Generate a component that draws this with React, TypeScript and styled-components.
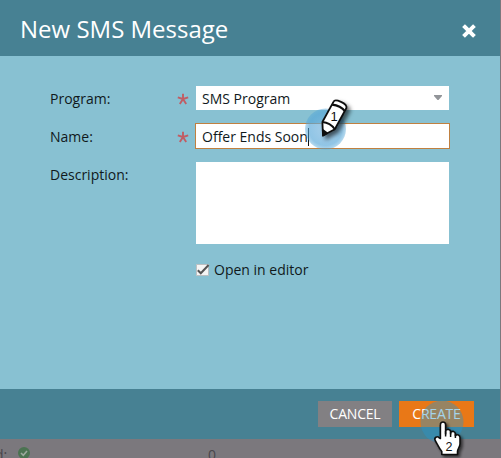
import React from "react";
import styled, { createGlobalStyle } from "styled-components";

const GlobalStyle = createGlobalStyle`
  *, *::before, *::after { box-sizing: border-box; }
  body {
    margin: 0;
    overflow: hidden;
    background: #7b787d;
    font-family: "Open Sans", sans-serif;
    font-size: 14px;
    line-height: 20px;
    color: #10191c;
  }
`;

const Page = styled.div`
  position: relative;
  width: 501px;
  height: 458px;
  overflow: hidden;
`;

const Dialog = styled.section`
  width: 500px;
  height: 439px;
  display: flex;
  flex-direction: column;
`;

const Header = styled.header`
  height: 56px;
  flex: none;
  display: flex;
  align-items: center;
  justify-content: space-between;
  padding: 2px 23px 0 20px;
  background: #478193;
`;

const Title = styled.h1`
  margin: 0;
  font-size: 24px;
  line-height: 32px;
  font-weight: 400;
  color: #fff;
`;

const CloseButton = styled.button`
  display: flex;
  margin: 3px 0 0;
  padding: 0;
  border: 0;
  background: none;
`;

const Body = styled.div`
  flex: 1;
  padding: 30px 50px 0;
  background: #88c1d2;
`;

const Field = styled.div<{ $gap?: number }>`
  display: grid;
  grid-template-columns: 127px 19px 254px;
  align-items: start;
  margin-bottom: ${(p) => p.$gap ?? 0}px;
`;

const Label = styled.label<{ $top?: number }>`
  padding-top: ${(p) => p.$top ?? 3}px;
`;

const Required = styled.svg<{ $top: number }>`
  display: block;
  margin-top: ${(p) => p.$top}px;
`;

const Select = styled.div`
  width: 253px;
  height: 24px;
  display: flex;
  align-items: center;
  justify-content: space-between;
  padding: 2px 7px 0 6px;
  background: #fff;
`;

const Arrow = styled.svg`
  margin-top: -4px;
`;

const TextInput = styled.div`
  width: 255px;
  height: 26px;
  margin-left: -1px;
  display: flex;
  align-items: center;
  padding: 1px 6px 0;
  border: 1px solid #c08040;
  background: #fff;
`;

const Caret = styled.span`
  width: 1px;
  height: 18px;
  background: #111;
`;

const TextArea = styled.div`
  width: 253px;
  height: 82px;
  background: #fff;
`;

const CheckRow = styled.label`
  display: flex;
  align-items: center;
  gap: 4px;
  margin: 16px 0 0 146px;
`;

const Footer = styled.footer`
  height: 50px;
  flex: none;
  display: flex;
  align-items: center;
  justify-content: flex-end;
  gap: 7px;
  padding: 0 26px 0 0;
  background: #478193;
`;

const Button = styled.button<{ $primary?: boolean }>`
  width: ${(p) => (p.$primary ? 75 : 74)}px;
  height: 26px;
  padding: 0;
  border: 0;
  font: 400 14px/26px "Open Sans", sans-serif;
  letter-spacing: -0.2px;
  color: #fff;
  background: ${(p) => (p.$primary ? "#e97817" : "#828083")};
`;

const Backdrop = styled.div`
  height: 19px;
  display: flex;
  align-items: flex-start;
  padding-top: 6px;
  color: #49464b;
`;

const Status = styled.span`
  width: 213px;
  display: flex;
  gap: 11px;
  margin-left: -5px;
`;

const StatusIcon = styled.svg`
  margin-top: 2px;
`;

const Marker = styled.svg<{ $x: number; $y: number }>`
  position: absolute;
  left: ${(p) => p.$x}px;
  top: ${(p) => p.$y}px;
  overflow: visible;
  pointer-events: none;
`;

const Asterisk = ({ top }: { top: number }) => (
  <Required $top={top} width="12" height="12" viewBox="0 0 12 12">
    <path
      d="M6 6V.7M6 6 .8 4.4M6 6l5.2-1.6M6 6l-3.2 4.9M6 6l3.2 4.9"
      stroke="#c15d64"
      strokeWidth="1.9"
      fill="none"
    />
  </Required>
);

const PencilMarker = () => (
  <Marker $x={300} $y={95} width="55" height="60" viewBox="0 0 55 60">
    <defs>
      <filter id="pencil-shadow" x="-50%" y="-50%" width="200%" height="200%">
        <feDropShadow dx="3" dy="3" stdDeviation="2" floodColor="#000" floodOpacity=".6" />
      </filter>
      <radialGradient id="pencil-glow">
        <stop offset="0" stopColor="#78b4de" stopOpacity=".65" />
        <stop offset=".8" stopColor="#55a6d8" stopOpacity=".65" />
        <stop offset="1" stopColor="#4ca2d6" stopOpacity=".4" />
      </radialGradient>
    </defs>
    <circle cx="25.5" cy="34" r="20.5" fill="url(#pencil-glow)" />
    <g filter="url(#pencil-shadow)" stroke="#111" strokeWidth="1.8" strokeLinejoin="round">
      <path d="M33.6 6.6C35 3.6 47.5 8 46.4 13L34.8 34.2 23 40.5 22.4 27Z" fill="#fff" />
      <path d="M32.1 9.6C37 10.2 42 12.4 44.9 16.2" fill="none" strokeWidth="2.2" />
      <path d="M22.4 27c4.8.4 9.5 3 12.4 7.2" fill="none" />
      <path d="m22.8 35 4.4 3.3-4 2.2Z" fill="#111" />
    </g>
    <text x="34" y="26" textAnchor="middle" fontFamily="Liberation Sans, sans-serif" fontSize="13" fill="#111">
      1
    </text>
  </Marker>
);

const HandMarker = () => (
  <Marker $x={415} $y={395} width="60" height="63" viewBox="0 0 60 63">
    <defs>
      <filter id="hand-shadow" x="-50%" y="-50%" width="200%" height="200%">
        <feDropShadow dx="2" dy="2" stdDeviation="1.8" floodColor="#000" floodOpacity=".6" />
      </filter>
    </defs>
    <circle cx="27" cy="27" r="21.5" fill="#2795cc" fillOpacity=".42" />
    <g filter="url(#hand-shadow)">
      <path
        d="M25.4 43.5V29.8c0-3.8 5.2-3.8 5.2 0V39v-3.2c1.4-2.3 4.9-1.5 5 1.2v2-1.6c1.5-1.9 4.7-.9 4.8 1.5v1.8c1.7-1.9 4.6-.7 4.6 1.8V49c0 3-2.5 5-2.5 7.5v3H26.8v-3c-3-3.4-4.4-7.2-6.6-11-1.4-2.8 2-4.9 3.9-2.8Z"
        fill="#fff"
        stroke="#111"
        strokeWidth="1.6"
        strokeLinejoin="round"
      />
      <path d="M30.6 36v5.5M35.6 37v5M40.4 38.5v4.5" stroke="#111" strokeWidth="1.5" />
    </g>
    <text x="34" y="55.5" textAnchor="middle" fontFamily="Liberation Sans, sans-serif" fontSize="12.5" fill="#111">
      2
    </text>
  </Marker>
);

export default function App() {
  return (
    <>
      <GlobalStyle />
      <Page>
        <Dialog>
          <Header>
            <Title>New SMS Message</Title>
            <CloseButton aria-label="Close">
              <svg width="16" height="16" viewBox="0 0 16 16">
                <path d="m3.2 3.2 9.6 9.6M12.8 3.2l-9.6 9.6" stroke="#fff" strokeWidth="4.6" strokeLinecap="square" strokeLinejoin="round" transform="translate(1.2 1.2) scale(.85)" />
              </svg>
            </CloseButton>
          </Header>
          <Body>
            <Field $gap={13}>
              <Label>Program:</Label>
              <Asterisk top={7} />
              <Select>
                SMS Program
                <Arrow width="8" height="5" viewBox="0 0 8 5">
                  <path d="M0 0h8v1L4.5 5h-1L0 1Z" fill="#929599" />
                </Arrow>
              </Select>
            </Field>
            <Field $gap={13}>
              <Label $top={4}>Name:</Label>
              <Asterisk top={8} />
              <TextInput>
                Offer Ends Soon
                <Caret />
              </TextInput>
            </Field>
            <Field>
              <Label>Description:</Label>
              <span />
              <TextArea />
            </Field>
            <CheckRow>
              <svg width="14" height="14" viewBox="0 0 14 14">
                <path d="M.5 1.5h12v11H.5Z" fill="#f5f5f5" stroke="#bcc0c2" />
                <path d="m1.8 7.3 3 3L12.6 2" fill="none" stroke="#555" strokeWidth="2" />
              </svg>
              Open in editor
            </CheckRow>
          </Body>
          <Footer>
            <Button>CANCEL</Button>
            <Button $primary>CREATE</Button>
          </Footer>
        </Dialog>
        <Backdrop>
          <Status>
            d:
            <StatusIcon width="12" height="12" viewBox="0 0 12 12">
              <circle cx="6" cy="6" r="6" fill="#4b7351" />
              <path d="m3 6 2.3 2.3L9 4" fill="none" stroke="#9aa89c" strokeWidth="1.6" />
            </StatusIcon>
          </Status>
          <span>0</span>
        </Backdrop>
        <PencilMarker />
        <HandMarker />
      </Page>
    </>
  );
}
